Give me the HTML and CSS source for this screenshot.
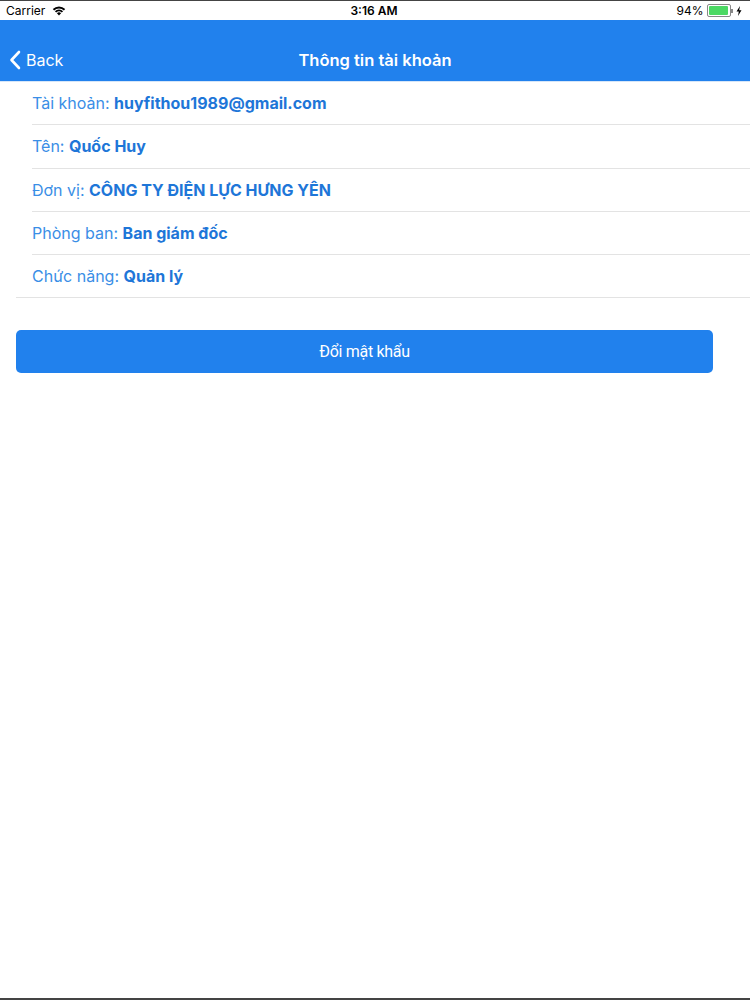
FILE: index.html
```html
<!DOCTYPE html>
<html lang="vi">
<head>
    <meta charset="UTF-8">
    <meta name="viewport" content="width=device-width, initial-scale=1.0">
    <title>Thông tin tài khoản</title>
    <link rel="stylesheet" href="styles.css">
</head>
<body>
    <div class="screen">
        <div class="status-bar">
            <div class="status-left">
                <span>Carrier</span>
                <svg class="wifi" width="14" height="10" viewBox="0 0 14 10">
                    <path d="M7 9.6 L4.9 7.3 A3 3 0 0 1 9.1 7.3 Z" fill="#000"/>
                    <path d="M2.9 5.2 A5.8 5.8 0 0 1 11.1 5.2 L9.8 6.6 A4 4 0 0 0 4.2 6.6 Z" fill="#000"/>
                    <path d="M0.8 3.1 A8.8 8.8 0 0 1 13.2 3.1 L11.9 4.5 A7 7 0 0 0 2.1 4.5 Z" fill="#000"/>
                </svg>
            </div>
            <div class="status-time">3:16 AM</div>
            <div class="status-right">
                <span>94%</span>
                <div class="battery">
                    <div class="battery-level"></div>
                </div>
                <div class="battery-tip"></div>
                <svg class="bolt" width="6" height="10" viewBox="0 0 6 10">
                    <path d="M4 0 L0.5 5.6 L2.8 5.6 L2 10 L5.5 4.2 L3.2 4.2 Z" fill="#000"/>
                </svg>
            </div>
        </div>

        <div class="nav-bar">
            <div class="back">
                <svg width="12" height="20" viewBox="0 0 12 20">
                    <path d="M10 2 L2.5 10 L10 18" fill="none" stroke="#fff" stroke-width="2.6" stroke-linecap="round" stroke-linejoin="round"/>
                </svg>
                <span>Back</span>
            </div>
            <div class="nav-title">Thông tin tài khoản</div>
        </div>

        <div class="info-list">
            <div class="info-row"><span class="label">Tài khoản: </span><b>huyfithou1989@gmail.com</b></div>
            <div class="info-row"><span class="label">Tên: </span><b>Quốc Huy</b></div>
            <div class="info-row"><span class="label">Đơn vị: </span><b>CÔNG TY ĐIỆN LỰC HƯNG YÊN</b></div>
            <div class="info-row"><span class="label">Phòng ban: </span><b>Ban giám đốc</b></div>
            <div class="info-row last"><span class="label">Chức năng: </span><b>Quản lý</b></div>
        </div>

        <button class="change-pass">Đổi mật khẩu</button>
    </div>
</body>
</html>
```

FILE: styles.css
```css
body {
    margin: 0;
    font-family: Inter, "Noto Sans", sans-serif;
    background-color: #fff;
}
.screen {
    width: 750px;
    height: 1000px;
    box-sizing: border-box;
    border-top: 1px solid #444;
    border-bottom: 2px solid #444;
    display: flex;
    flex-direction: column;
}
.status-bar {
    height: 19px;
    display: flex;
    align-items: center;
    justify-content: space-between;
    padding: 0 8px 0 6px;
    font-size: 12px;
    color: #000;
}
.status-left,
.status-right {
    width: 120px;
    display: flex;
    align-items: center;
}
.status-left span {
    margin-right: 7px;
}
.status-right {
    justify-content: flex-end;
}
.status-right span {
    margin-right: 4px;
}
.status-time {
    font-weight: 600;
}
.battery {
    width: 20px;
    height: 9px;
    border: 1px solid #888;
    border-radius: 2px;
    padding: 1px;
}
.battery-level {
    width: 94%;
    height: 100%;
    background-color: #4cd964;
    border-radius: 1px;
}
.battery-tip {
    width: 1.5px;
    height: 4px;
    background-color: #888;
    margin-right: 3px;
}
.nav-bar {
    height: 62px;
    background-color: #2181ed;
    border-bottom: 1px solid #d6e6f8;
    display: flex;
    align-items: center;
    justify-content: center;
    position: relative;
    box-sizing: border-box;
}
.back {
    position: absolute;
    left: 9px;
    top: 30px;
    display: flex;
    align-items: center;
    color: #fff;
    font-size: 16px;
}
.back svg {
    margin-right: 5px;
}
.nav-title {
    color: #fff;
    font-size: 16.5px;
    font-weight: 600;
    margin-top: 19px;
}
.info-list {
    padding-left: 16px;
}
.info-row {
    height: 43.25px;
    box-sizing: border-box;
    margin-left: 16px;
    border-bottom: 1px solid #e3e3e3;
    display: flex;
    align-items: center;
    font-size: 16px;
    color: #3a8ee6;
    white-space: pre;
}
.info-row b {
    color: #1e76d8;
    font-weight: 700;
}
.info-row.last {
    margin-left: 0;
    padding-left: 16px;
}
.change-pass {
    margin: 32px 0 0 16px;
    width: 697px;
    height: 43px;
    background-color: #2181ed;
    color: #fff;
    border: none;
    border-radius: 5px;
    font-family: Roboto, sans-serif;
    font-size: 16px;
    letter-spacing: -0.3px;
}
```
